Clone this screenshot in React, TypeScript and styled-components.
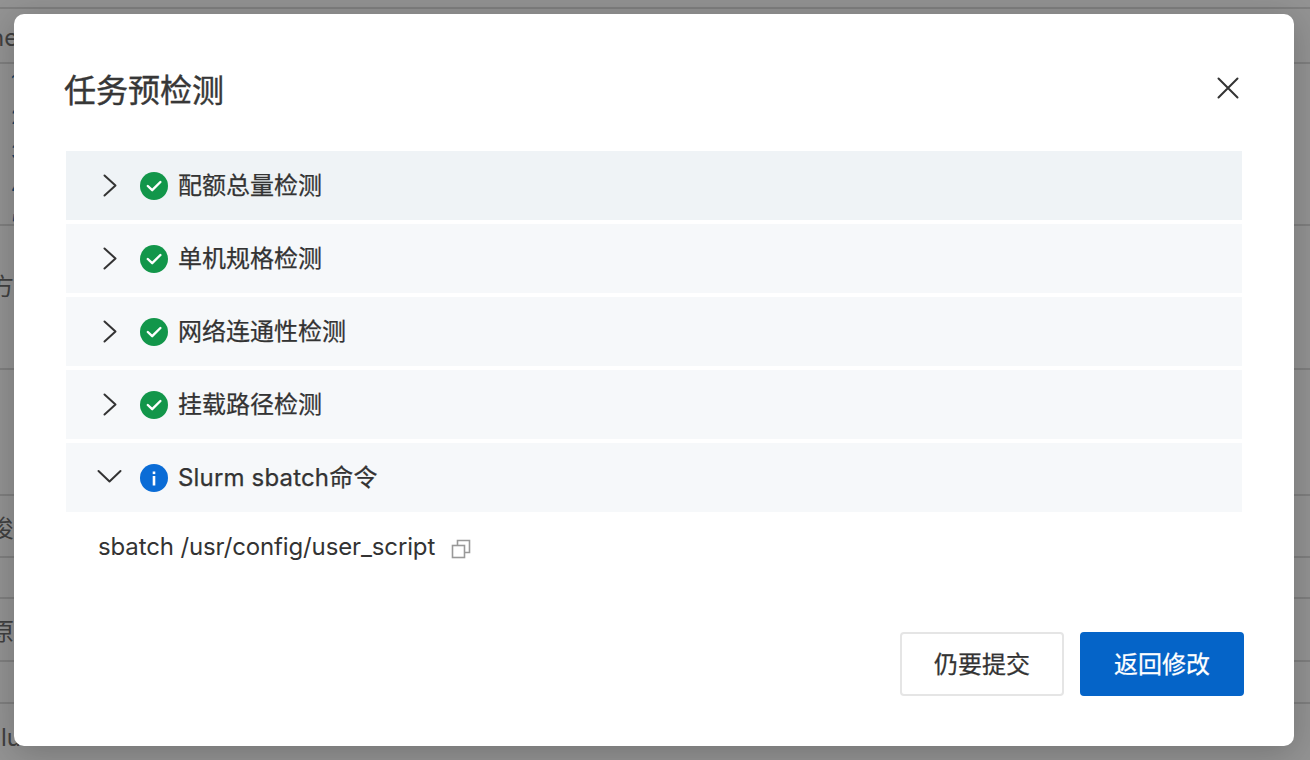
import React from "react";
import styled, { createGlobalStyle } from "styled-components";

const Global = createGlobalStyle`
  html, body { margin: 0; padding: 0; height: 100%; overflow: hidden; }
  body { font-family: Inter, "Noto Sans CJK SC", sans-serif; }
`;

const Page = styled.div`
  position: relative;
  width: 1310px;
  height: 760px;
  overflow: hidden;
  background: #939393;
`;

const BackRow = styled.div<{ $h: number }>`
  height: ${(p) => p.$h}px;
  box-sizing: border-box;
  border-bottom: 2px solid #7f7f7f;
  display: flex;
  align-items: center;
  overflow: hidden;
  font-size: 24px;
`;

const LastBackRow = styled(BackRow)`
  border-bottom: 0;
`;

const BackText = styled.span<{ $x: number; $dy?: number }>`
  margin-left: ${(p) => p.$x}px;
  margin-top: ${(p) => (p.$dy || 0) * 2}px;
  white-space: nowrap;
  color: #404040;
`;

const BackNums = styled.div`
  margin-left: 11px;
  align-self: flex-start;
  padding-top: 1px;
  display: flex;
  flex-direction: column;
  color: #17466a;
  font-size: 20px;
  line-height: 35px;
`;

const Modal = styled.div`
  position: absolute;
  left: 14px;
  top: 14px;
  width: 1280px;
  height: 732px;
  box-sizing: border-box;
  background: #fff;
  border-radius: 10px;
  box-shadow: 0 6px 34px rgba(0, 0, 0, 0.22);
  padding: 52px 50px 50px 52px;
  display: flex;
  flex-direction: column;
`;

const Header = styled.div`
  display: flex;
  align-items: center;
  justify-content: space-between;
  height: 48px;
  margin-bottom: 37px;
`;

const Title = styled.h2`
  margin: -4px 0 0 -2px;
  font-size: 32px;
  line-height: 48px;
  font-weight: 400;
  color: #373737;
  font-family: "Noto Sans CJK SC", sans-serif;
  -webkit-text-stroke: 0.4px #373737;
`;

const CloseBtn = styled.button`
  width: 24px;
  height: 24px;
  margin: -4px 4px 0 0;
  padding: 0;
  border: 0;
  background: none;
  display: flex;
  align-items: center;
  justify-content: center;
`;

const List = styled.div`
  display: flex;
  flex-direction: column;
  gap: 4px;
  width: 1176px;
`;

const Item = styled.div<{ $active?: boolean }>`
  height: 69px;
  background: ${(p) => (p.$active ? "#eff3f6" : "#f6f8fa")};
  display: flex;
  align-items: center;
  padding-left: 32px;
  gap: 19px;
  font-size: 24px;
  color: #333;
`;

const ItemLabel = styled.span`
  line-height: 36px;
  -webkit-text-stroke: 0.25px #333;
`;

const LatinLabel = styled(ItemLabel)`
  letter-spacing: 0.17px;
`;

const Chevron = styled.svg`
  width: 24px;
  height: 24px;
  flex: none;
  overflow: visible;
`;

const StatusIcon = styled.svg`
  width: 28px;
  height: 28px;
  flex: none;
  margin-left: -1px;
  margin-right: -9px;
`;

const Detail = styled.div`
  display: flex;
  align-items: center;
  gap: 16px;
  padding: 17px 0 0 32px;
  font-size: 24px;
  line-height: 36px;
  color: #333;
  letter-spacing: -0.13px;
`;

const CopyIcon = styled.svg`
  width: 20px;
  height: 20px;
  flex: none;
  margin-top: 3px;
`;

const Footer = styled.div`
  margin-top: auto;
  display: flex;
  justify-content: flex-end;
  gap: 16px;
`;

const Button = styled.button<{ $primary?: boolean }>`
  width: 164px;
  height: 64px;
  box-sizing: border-box;
  border-radius: 4px;
  border: 2px solid ${(p) => (p.$primary ? "#0564c8" : "#e5e5e5")};
  background: ${(p) => (p.$primary ? "#0564c8" : "#fff")};
  color: ${(p) => (p.$primary ? "#fff" : "#333")};
  font-size: 24px;
  font-family: Inter, "Noto Sans CJK SC", sans-serif;
  padding: 0 0 3px;
  -webkit-text-stroke: 0.25px ${(p) => (p.$primary ? "#fff" : "#333")};
`;

const checks = ["配额总量检测", "单机规格检测", "网络连通性检测", "挂载路径检测"];

const Right = () => (
  <Chevron viewBox="0 0 24 24" fill="none" stroke="#333" strokeWidth="2" strokeLinecap="round" strokeLinejoin="round">
    <path d="M6.5 1.5 L17.5 11.5 L6.5 21.5" />
  </Chevron>
);
const Down = () => (
  <Chevron viewBox="0 0 24 24" fill="none" stroke="#333" strokeWidth="2" strokeLinecap="round" strokeLinejoin="round">
    <path d="M0.5 5 L11.5 15.5 L22.5 5" />
  </Chevron>
);
const Check = () => (
  <StatusIcon viewBox="0 0 28 28">
    <circle cx="14" cy="14" r="14" fill="#12964a" />
    <path d="M7.8 14 L12.2 18.2 L20.4 10" fill="none" stroke="#fff" strokeWidth="2.4" strokeLinecap="round" strokeLinejoin="round" />
  </StatusIcon>
);
const Info = () => (
  <StatusIcon viewBox="0 0 28 28">
    <circle cx="14" cy="14" r="14" fill="#0a6cd6" />
    <rect x="12.7" y="12" width="2.6" height="9.5" fill="#fff" />
    <rect x="12.7" y="7.5" width="2.6" height="2.6" fill="#fff" />
  </StatusIcon>
);

export default function App() {
  return (
    <Page>
      <Global />
      <BackRow $h={9} />
      <BackRow $h={55}>
        <BackText $x={-10} $dy={2}>ne</BackText>
      </BackRow>
      <BackRow $h={162}>
        <BackNums>
          <span>1</span>
          <span>2</span>
          <span>3</span>
          <span>4</span>
          <span>5</span>
        </BackNums>
      </BackRow>
      <BackRow $h={144}>
        <BackText $x={-10} $dy={-13}>方</BackText>
      </BackRow>
      <BackRow $h={126} />
      <BackRow $h={62}>
        <BackText $x={-10}>俊</BackText>
      </BackRow>
      <BackRow $h={41} />
      <BackRow $h={63}>
        <BackText $x={-10}>原</BackText>
      </BackRow>
      <BackRow $h={42} />
      <LastBackRow $h={56}>
        <BackText $x={1} $dy={5}>lu</BackText>
      </LastBackRow>
      <Modal>
        <Header>
          <Title>任务预检测</Title>
          <CloseBtn aria-label="关闭">
            <svg width="24" height="24" viewBox="0 0 24 24" fill="none" stroke="#333" strokeWidth="2" strokeLinecap="round">
              <path d="M2.5 2.5 L21.5 21.5 M21.5 2.5 L2.5 21.5" />
            </svg>
          </CloseBtn>
        </Header>
        <List>
          {checks.map((c, i) => (
            <Item key={c} $active={i === 0}>
              <Right />
              <Check />
              <ItemLabel>{c}</ItemLabel>
            </Item>
          ))}
          <Item>
            <Down />
            <Info />
            <LatinLabel>Slurm sbatch命令</LatinLabel>
          </Item>
        </List>
        <Detail>
          <span>sbatch /usr/config/user_script</span>
          <CopyIcon viewBox="0 0 20 20" fill="none" stroke="#999" strokeWidth="1.6">
            <rect x="1.5" y="6.5" width="12" height="12" />
            <path d="M6.5 6 V1.5 H18.5 V13.5 H14" />
          </CopyIcon>
        </Detail>
        <Footer>
          <Button>仍要提交</Button>
          <Button $primary>返回修改</Button>
        </Footer>
      </Modal>
    </Page>
  );
}
